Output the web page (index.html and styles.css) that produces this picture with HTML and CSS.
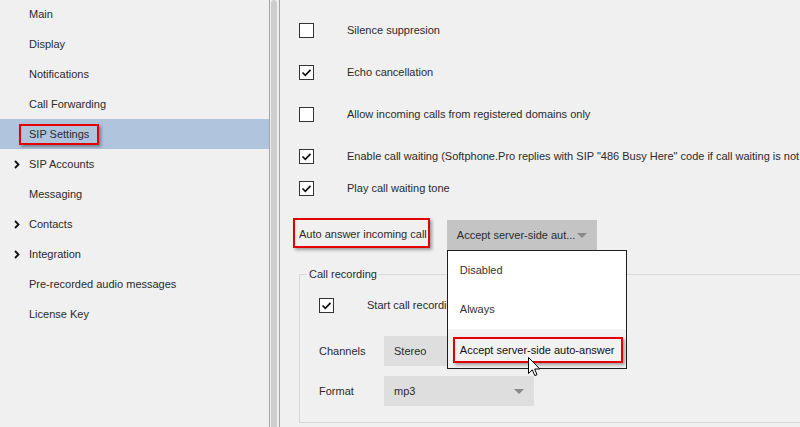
FILE: index.html
```html
<!DOCTYPE html>
<html lang="en">
<head>
<meta charset="utf-8">
<title>SIP Settings</title>
<link rel="stylesheet" href="styles.css">
</head>
<body>
<div class="app">
  <nav class="sidebar">
    <div class="nav-list">
      <div class="nav-item"><span class="twisty"></span><span class="nav-label">Main</span></div>
      <div class="nav-item"><span class="twisty"></span><span class="nav-label">Display</span></div>
      <div class="nav-item"><span class="twisty"></span><span class="nav-label">Notifications</span></div>
      <div class="nav-item"><span class="twisty"></span><span class="nav-label">Call Forwarding</span></div>
      <div class="nav-item selected"><span class="twisty"></span><span class="nav-label marked">SIP Settings</span></div>
      <div class="nav-item"><span class="twisty"><svg class="chev" viewBox="0 0 6 9" width="6" height="9"><path d="M1 1 L4.5 4.5 L1 8"/></svg></span><span class="nav-label">SIP Accounts</span></div>
      <div class="nav-item"><span class="twisty"></span><span class="nav-label">Messaging</span></div>
      <div class="nav-item"><span class="twisty"><svg class="chev" viewBox="0 0 6 9" width="6" height="9"><path d="M1 1 L4.5 4.5 L1 8"/></svg></span><span class="nav-label">Contacts</span></div>
      <div class="nav-item"><span class="twisty"><svg class="chev" viewBox="0 0 6 9" width="6" height="9"><path d="M1 1 L4.5 4.5 L1 8"/></svg></span><span class="nav-label">Integration</span></div>
      <div class="nav-item"><span class="twisty"></span><span class="nav-label">Pre-recorded audio messages</span></div>
      <div class="nav-item"><span class="twisty"></span><span class="nav-label">License Key</span></div>
    </div>
  </nav>
  <div class="splitter"><div class="thumb"></div></div>
  <main class="content">
    <div class="opt"><span class="cb"></span><span class="opt-text">Silence suppresion</span></div>
    <div class="opt"><span class="cb"><svg viewBox="0 0 13 13" width="13" height="13"><path d="M2.5 6.5 L5.3 9.3 L10.5 3.8"/></svg></span><span class="opt-text">Echo cancellation</span></div>
    <div class="opt"><span class="cb"></span><span class="opt-text">Allow incoming calls from registered domains only</span></div>
    <div class="opt"><span class="cb"><svg viewBox="0 0 13 13" width="13" height="13"><path d="M2.5 6.5 L5.3 9.3 L10.5 3.8"/></svg></span><span class="opt-text">Enable call waiting (Softphone.Pro replies with SIP "486 Busy Here" code if call waiting is not enabled)</span></div>
    <div class="opt opt-short"><span class="cb"><svg viewBox="0 0 13 13" width="13" height="13"><path d="M2.5 6.5 L5.3 9.3 L10.5 3.8"/></svg></span><span class="opt-text">Play call waiting tone</span></div>

    <div class="auto-row">
      <span class="auto-label marked">Auto answer incoming call</span>
      <div class="combo-wrap">
        <div class="combo combo-open"><span class="combo-text">Accept server-side aut...</span><span class="arrow"></span></div>
        <div class="popup">
          <div class="popup-item">Disabled</div>
          <div class="popup-item">Always</div>
          <div class="popup-item hover"><span class="popup-mark marked">Accept server-side auto-answer</span></div>
          <svg class="cursor" viewBox="0 0 13 20" width="13" height="20"><path d="M0.5 0.5 L0.5 16.5 L4.3 12.8 L6.8 18.6 L9 17.7 L6.6 12 L11.8 12 Z"/></svg>
        </div>
      </div>
    </div>

    <fieldset class="group">
      <legend class="group-title">Call recording</legend>
      <div class="group-body">
        <div class="opt opt-short"><span class="cb"><svg viewBox="0 0 13 13" width="13" height="13"><path d="M2.5 6.5 L5.3 9.3 L10.5 3.8"/></svg></span><span class="opt-text">Start call recording automatically</span></div>
        <div class="form-row"><span class="form-label">Channels</span><div class="combo combo-light"><span class="combo-text">Stereo</span><span class="arrow"></span></div></div>
        <div class="form-row"><span class="form-label">Format</span><div class="combo combo-light"><span class="combo-text">mp3</span><span class="arrow"></span></div></div>
      </div>
    </fieldset>
  </main>
</div>
</body>
</html>
```

FILE: styles.css
```css
* { box-sizing: border-box; }

html, body {
  margin: 0;
  padding: 0;
  width: 800px;
  height: 427px;
  overflow: hidden;
  background: #f0f0f0;
  font-family: "Liberation Sans", Arial, sans-serif;
  font-size: 11px;
  line-height: 13px;
  color: #2b2b2b;
}

.app {
  display: flex;
  height: 427px;
}

/* ---------- sidebar ---------- */
.sidebar {
  width: 270px;
  flex: none;
  background: #f0f0f0;
  border-right: 1px solid #a3a3a3;
  overflow: hidden;
}

.nav-list {
  margin-top: -1px;
  display: flex;
  flex-direction: column;
}

.nav-item {
  height: 30px;
  display: flex;
  align-items: center;
  padding-left: 14px;
}

.nav-item.selected {
  background: #b0c4de;
}

.twisty {
  width: 15px;
  height: 13px;
  flex: none;
  display: flex;
  align-items: center;
}

.chev path {
  fill: none;
  stroke: #111;
  stroke-width: 1.8;
}

.marked {
  border: 2px solid #e30000;
  box-shadow: 2px 2px 3px rgba(0, 0, 0, 0.35);
}

.nav-label.marked {
  margin-left: -10px;
  padding: 2px 8px 2px 8px;
}

/* ---------- splitter ---------- */
.splitter {
  width: 10px;
  flex: none;
  padding: 0 2px 0 1px;
  border-right: 1px solid #a3a3a3;
  background: #f0f0f0;
}

.thumb {
  height: 100%;
  background: #cdcdcd;
  border-radius: 3px 3px 0 0;
}

/* ---------- content ---------- */
.content {
  flex: 1;
  position: relative;
  padding: 9px 0 0 19px;
  overflow: hidden;
}

.opt {
  height: 42px;
  display: flex;
  align-items: center;
  white-space: nowrap;
}

.opt.opt-short {
  height: 22px;
}

.cb {
  width: 15px;
  height: 15px;
  flex: none;
  border: 1px solid #333;
  background: #fff;
  margin-right: 33px;
  display: flex;
}

.cb path {
  fill: none;
  stroke: #111;
  stroke-width: 1.7;
}

.auto-row {
  margin-top: 19px;
  display: flex;
  align-items: flex-start;
  height: 32px;
}

.auto-label {
  margin-left: -6px;
  padding: 8px 1px 5px 4px;
  white-space: nowrap;
}

.combo-wrap {
  position: relative;
  margin-left: 17px;
  margin-top: 2px;
}

.combo {
  width: 150px;
  height: 30px;
  display: flex;
  align-items: center;
  justify-content: space-between;
  padding: 0 10px 0 10px;
  white-space: nowrap;
}

.combo-open {
  background: #c4c4c4;
}

.combo-light {
  background: #dedede;
}

.arrow {
  width: 0;
  height: 0;
  border-left: 5px solid transparent;
  border-right: 5px solid transparent;
  border-top: 5px solid #888;
  margin-top: 1px;
}

.popup {
  position: absolute;
  top: 30px;
  left: 0;
  width: 180px;
  height: 119px;
  background: #fff;
  border: 1px solid #1e1e1e;
  z-index: 10;
  display: flex;
  flex-direction: column;
}

.popup-item {
  height: 39px;
  display: flex;
  align-items: center;
  padding-left: 12px;
  color: #333;
  white-space: nowrap;
}

.popup-item.hover {
  background: #f2f2f2;
  padding-left: 5px;
  align-items: flex-start;
  padding-top: 8px;
}

.popup-mark {
  padding: 5px 7px 4px 5px;
  color: #111;
}

.cursor {
  position: absolute;
  left: 80px;
  top: 106px;
}

.cursor path {
  fill: #fff;
  stroke: #000;
  stroke-width: 1;
  stroke-linejoin: miter;
}

/* ---------- group box ---------- */
.group {
  margin: 18px 0 0 0;
  padding: 0;
  width: 620px;
  height: 155px;
  border: 1px solid #d8d8d8;
}

.group-title {
  margin-left: 7px;
  padding: 0 2px;
  color: #2b2b2b;
}

.group-body {
  padding: 13px 0 0 19px;
}

.form-row {
  display: flex;
  align-items: center;
  margin-top: 10px;
}

.group-body .opt + .form-row {
  margin-top: 20px;
}

.form-label {
  width: 65px;
  flex: none;
}
```
